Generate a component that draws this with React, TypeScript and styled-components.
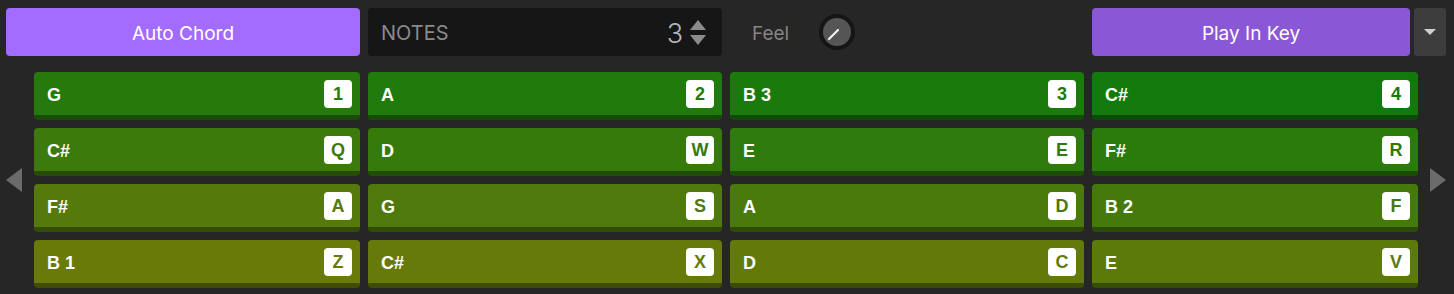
import styled, { createGlobalStyle } from 'styled-components';

const GlobalStyle = createGlobalStyle`
  html, body {
    margin: 0;
    padding: 0;
    background: #262626;
  }
  body {
    width: 1454px;
    height: 294px;
    overflow: hidden;
    font-family: Inter, 'Liberation Sans', Arial, sans-serif;
  }
`;

const Page = styled.div`
  padding: 8px 8px 0 6px;
`;

const TopBar = styled.div`
  display: grid;
  grid-template-columns: repeat(4, 354px);
  gap: 8px;
  height: 48px;
`;

const PurpleButton = styled.button<{ $bg: string }>`
  height: 48px;
  border: 0;
  border-radius: 4px;
  background: ${(p) => p.$bg};
  color: #fff;
  font-family: Inter, 'Liberation Sans', sans-serif;
  font-size: 19px;
  font-weight: 400;
  padding: 2px 0 0;
  cursor: pointer;
  flex: 1;
`;

const NotesBox = styled.div`
  display: flex;
  align-items: center;
  background: #161616;
  border-radius: 4px;
  padding: 2px 16px 0 13px;
`;

const NotesLabel = styled.span`
  flex: 1;
  color: #8a8a8a;
  font-size: 20px;
`;

const NotesValue = styled.span`
  color: #aeb6bf;
  font-size: 27px;
  font-weight: 300;
  margin-right: 7px;
`;

const Spinner = styled.div`
  display: flex;
  flex-direction: column;
  gap: 5px;
  margin-top: -2px;
`;

const FeelCell = styled.div`
  display: flex;
  align-items: center;
  padding-left: 22px;
  gap: 30px;
`;

const FeelLabel = styled.span`
  color: #858585;
  font-size: 19px;
  padding-top: 2px;
`;

const Knob = styled.div`
  width: 36px;
  height: 36px;
  border-radius: 50%;
  background: #151515;
  display: flex;
  align-items: center;
  justify-content: center;
`;

const KeyCell = styled.div`
  display: flex;
  gap: 4px;
`;

const DropButton = styled.button`
  width: 32px;
  height: 48px;
  border: 0;
  border-radius: 3px;
  background: #3d3d3d;
  display: flex;
  align-items: center;
  justify-content: center;
  padding: 0;
`;

const PadArea = styled.div`
  display: flex;
  align-items: center;
  margin-top: 16px;
`;

const Arrow = styled.div<{ $side: 'left' | 'right' }>`
  width: 28px;
  height: 216px;
  display: flex;
  align-items: center;
  justify-content: ${(p) => (p.$side === 'left' ? 'flex-start' : 'flex-end')};
`;

const PadGrid = styled.div`
  display: grid;
  grid-template-columns: 326px 354px 354px 326px;
  grid-auto-rows: 48px;
  gap: 8px;
`;

const Pad = styled.div<{ $bg: string; $edge: string }>`
  display: flex;
  align-items: center;
  justify-content: space-between;
  box-sizing: border-box;
  height: 48px;
  padding: 0 8px 0 13px;
  background: ${(p) => p.$bg};
  border-bottom: 5px solid ${(p) => p.$edge};
  border-radius: 4px;
  font-family: 'Liberation Sans', Arial, sans-serif;
`;

const PadName = styled.span`
  color: #fff;
  font-weight: 700;
  font-size: 18px;
  padding-top: 4px;
`;

const KeyBadge = styled.span<{ $color: string }>`
  width: 28px;
  height: 28px;
  border-radius: 4px;
  background: #fff;
  color: ${(p) => p.$color};
  display: flex;
  align-items: center;
  justify-content: center;
  font-weight: 700;
  font-size: 18px;
  padding-top: 1px;
  box-sizing: border-box;
`;

type PadData = { name: string; key: string; bg: string };

const pads: PadData[] = [
  { name: 'G', key: '1', bg: '#267a0c' },
  { name: 'A', key: '2', bg: '#217a0c' },
  { name: 'B 3', key: '3', bg: '#1b7a0c' },
  { name: 'C#', key: '4', bg: '#127a0c' },
  { name: 'C#', key: 'Q', bg: '#3d7a0c' },
  { name: 'D', key: 'W', bg: '#367a0c' },
  { name: 'E', key: 'E', bg: '#2f7a0c' },
  { name: 'F#', key: 'R', bg: '#2b7a0c' },
  { name: 'F#', key: 'A', bg: '#557a0b' },
  { name: 'G', key: 'S', bg: '#4f7a0b' },
  { name: 'A', key: 'D', bg: '#4a7a0b' },
  { name: 'B 2', key: 'F', bg: '#437a0b' },
  { name: 'B 1', key: 'Z', bg: '#6a7a09' },
  { name: 'C#', key: 'X', bg: '#667a09' },
  { name: 'D', key: 'C', bg: '#617a0a' },
  { name: 'E', key: 'V', bg: '#5c7a0a' },
];

// darken a hex colour for the pad's bottom edge
const shade = (hex: string, f: number) => {
  const n = parseInt(hex.slice(1), 16);
  const r = Math.round(((n >> 16) & 255) * f);
  const g = Math.round(((n >> 8) & 255) * f);
  const b = Math.round((n & 255) * f);
  return `rgb(${r}, ${g}, ${b})`;
};

export default function App() {
  return (
    <>
      <GlobalStyle />
      <Page>
        <TopBar>
          <PurpleButton $bg="#a36cff">Auto Chord</PurpleButton>
          <NotesBox>
            <NotesLabel>NOTES</NotesLabel>
            <NotesValue>3</NotesValue>
            <Spinner>
              <svg width="16" height="10" viewBox="0 0 16 10">
                <polygon points="8,0 16,10 0,10" fill="#8c8c8c" />
              </svg>
              <svg width="16" height="10" viewBox="0 0 16 10">
                <polygon points="0,0 16,0 8,10" fill="#8c8c8c" />
              </svg>
            </Spinner>
          </NotesBox>
          <FeelCell>
            <FeelLabel>Feel</FeelLabel>
            <Knob>
              <svg width="28" height="28" viewBox="0 0 28 28">
                <circle cx="14" cy="14" r="14" fill="#555" />
                <line
                  x1="15"
                  y1="12"
                  x2="6"
                  y2="21"
                  stroke="#f2f2f2"
                  strokeWidth="2.2"
                  strokeLinecap="round"
                />
              </svg>
            </Knob>
          </FeelCell>
          <KeyCell>
            <PurpleButton $bg="#8a58d6">Play In Key</PurpleButton>
            <DropButton>
              <svg width="12" height="6" viewBox="0 0 12 6">
                <polygon points="0,0 12,0 6,6" fill="#d0d0d0" />
              </svg>
            </DropButton>
          </KeyCell>
        </TopBar>
        <PadArea>
          <Arrow $side="left">
            <svg width="16" height="24" viewBox="0 0 16 24">
              <polygon points="16,0 16,24 0,12" fill="#6b6b6b" />
            </svg>
          </Arrow>
          <PadGrid>
            {pads.map((p, i) => (
              <Pad key={i} $bg={p.bg} $edge={shade(p.bg, 0.62)}>
                <PadName>{p.name}</PadName>
                <KeyBadge $color={p.bg}>{p.key}</KeyBadge>
              </Pad>
            ))}
          </PadGrid>
          <Arrow $side="right">
            <svg width="16" height="24" viewBox="0 0 16 24">
              <polygon points="0,0 0,24 16,12" fill="#6b6b6b" />
            </svg>
          </Arrow>
        </PadArea>
      </Page>
    </>
  );
}
